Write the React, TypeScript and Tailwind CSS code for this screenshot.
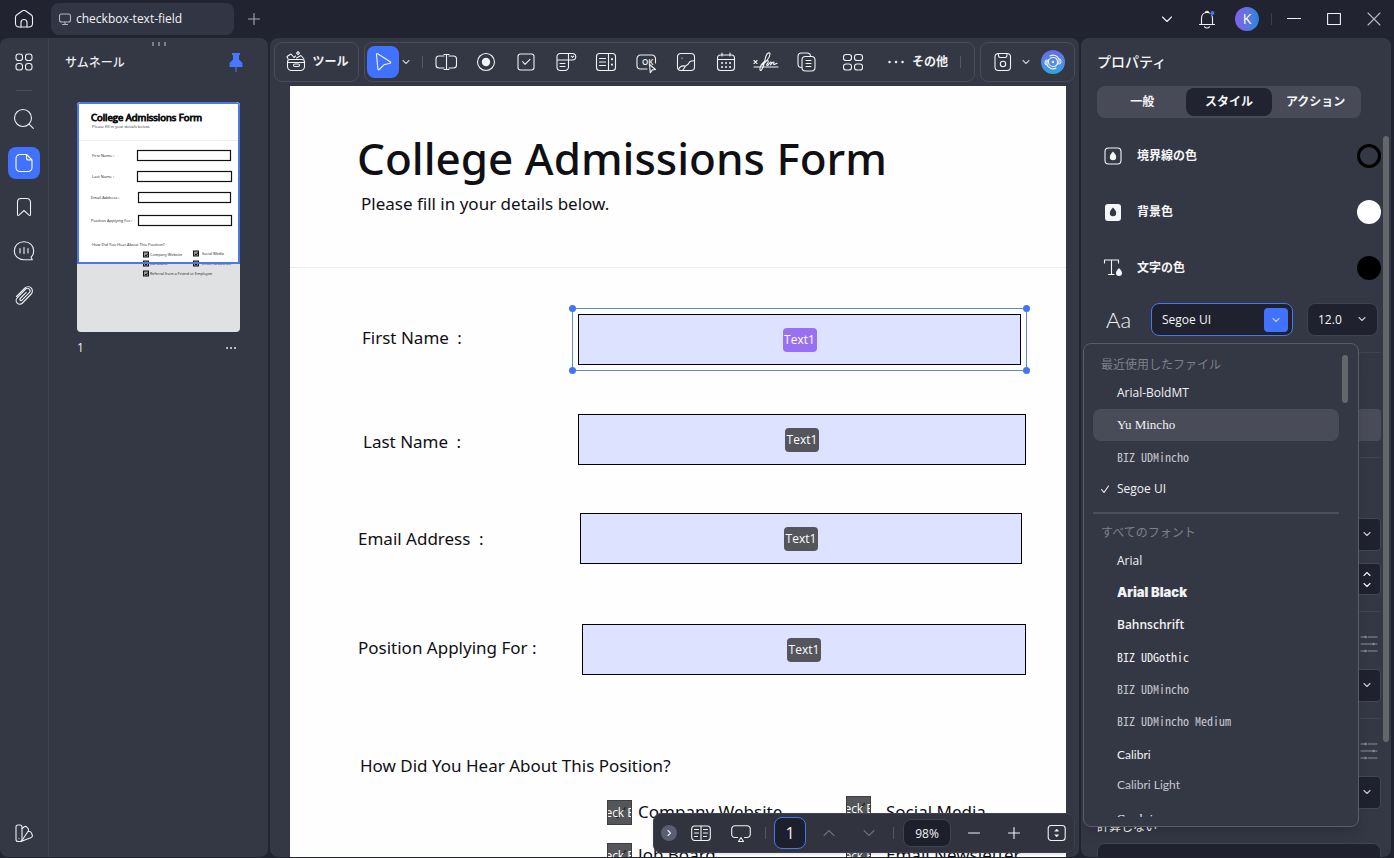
import React from 'react';
import type { ReactNode } from 'react';

interface IconProps {
  size?: number;
  className?: string;
  children: ReactNode;
}

const Icon = ({ size = 24, className = '', children }: IconProps) => (
  <svg
    width={size}
    height={size}
    viewBox={`0 0 ${size} ${size}`}
    fill="none"
    stroke="currentColor"
    strokeWidth="1.1"
    strokeLinecap="round"
    strokeLinejoin="round"
    className={`shrink-0 ${className}`}
    aria-hidden="true"
  >
    {children}
  </svg>
);

const ChevronDown = ({ className = '' }: { className?: string }) => (
  <Icon size={12} className={`text-[#c9cbd3] ${className}`}><path d="M3 4.5l3 3 3-3" /></Icon>
);

const Divider = () => <span className="h-3 w-px shrink-0 bg-[#555866]" />;

/* Title bar */

const TitleBar = () => (
  <header className="flex h-[38px] shrink-0 items-center text-[#f1f2f5]">
    <button aria-label="Home" className="flex h-8 w-12 items-center justify-center">
      <Icon>
        <path d="M3.5 10.2c0-.9.4-1.700 1.100-2.200l6-4.300a2.400 2.400 0 012.800 0l6 4.300c.7.5 1.100 1.300 1.100 2.200v6.300c0 2-1.500 3.500-3.500 3.500H7c-2 0-3.500-1.500-3.500-3.500z" />
        <path d="M9 20v-4.500a3 3 0 016 0V20" />
      </Icon>
    </button>
    <div className="ml-[3px] flex h-8 w-[183px] items-center gap-1 rounded-lg bg-[#323543] pl-[7px]">
      <Icon size={14} className="text-[#b4b7c2]">
        <rect x="1.500" y="2" width="11" height="8" rx="2" />
        <path d="M7 10v2M4.500 12.500h5" />
      </Icon>
      <span className="text-xs">checkbox-text-field</span>
    </div>
    <button aria-label="New tab" className="flex h-8 w-10 items-center justify-center text-[#a5a8b4]">
      <Icon size={14}><path d="M7 1.500v11M1.500 7h11" /></Icon>
    </button>
    <div className="ml-auto flex items-center">
      <button aria-label="Show tabs" className="flex h-8 w-10 items-center justify-center">
        <Icon size={14}><path d="M2.500 5L7 9.500 11.500 5" /></Icon>
      </button>
      <button aria-label="Notifications" className="flex h-8 w-10 items-center justify-center">
        <Icon>
          <path d="M4.500 17.500h15M6.500 17.500v-6c0-3.500 2.200-6 5.500-6s5.500 2.500 5.500 6v6M10.500 5.300a1.600 1.600 0 013 0M9.500 19.800c1.300 1.600 3.700 1.600 5 0" />
          <circle cx="17.500" cy="6" r="2.200" fill="#4579ff" stroke="#212331" strokeWidth="0.500" />
        </Icon>
      </button>
      <button className="mx-2 flex size-6 items-center justify-center rounded-full bg-linear-to-r from-[#8160e8] to-[#1584dc] text-sm text-white">K</button>
      <span className="ml-1 h-3 w-px bg-[#3b3e4d]" />
      <button aria-label="Minimize" className="ml-[2px] flex h-8 w-10 items-center justify-center">
        <Icon size={14}><path d="M0 6.500h14" /></Icon>
      </button>
      <button aria-label="Maximize" className="flex h-8 w-10 items-center justify-center">
        <Icon size={14}><rect x="0.600" y="1.500" width="12.800" height="11" /></Icon>
      </button>
      <button aria-label="Close" className="flex h-8 w-10 items-center justify-center text-[#b9bbc4]">
        <Icon size={14}><path d="M1 1l12 12M13 1L1 13" /></Icon>
      </button>
    </div>
  </header>
);

/* Left side */

const railItems = [
  {
    label: 'Search',
    icon: <><circle cx="11" cy="11" r="8.500" /><path d="M17.300 17.300l4 4" /></>,
  },
  {
    label: 'Pages',
    active: true,
    icon: <path d="M14.500 3.500H8A4 4 0 004 7.500v9a4 4 0 004 4h8a4 4 0 004-4V9zM14.500 3.500V7a2 2 0 002 2H20" />,
  },
  {
    label: 'Bookmarks',
    icon: <path d="M5.500 19.500V7a3.500 3.500 0 013.500-3.500h6A3.500 3.500 0 0118.500 7v12.500c0 1-.8 1.300-1.500.7L12 15.500l-5 4.700c-.7.600-1.500.3-1.500-.7z" />,
  },
  {
    label: 'Comments',
    icon: <><path d="M12 2.800c-5.700 0-9.700 3.800-9.700 8.900s4 9 9.700 9h8.300l-1.300-2.500c1.700-1.500 2.700-3.800 2.700-6.500 0-5.100-4-8.900-9.700-8.900z" /><path d="M8 9.500v4.500M12 8.500v6M16 9.500v4.500" /></>,
  },
  {
    label: 'Attachments',
    icon: <path d="M4.500 13.500L13 5a4.300 4.300 0 016.200 6l-8.700 9a3.700 3.700 0 01-5.300-5.200l8.500-8.600a2.500 2.500 0 013.600 3.500L10 17.200a1.200 1.200 0 01-1.800-1.700l6-6.200" />,
  },
];

const Rail = () => (
  <nav className="flex w-[49px] shrink-0 flex-col items-center gap-3 border-r border-[#41434f] py-2 text-[#eceef3]">
    <button aria-label="Apps" className="flex size-8 items-center justify-center">
      <Icon>
        <rect x="4" y="4" width="6.500" height="6.500" rx="2.600" />
        <rect x="13.500" y="4" width="6.500" height="6.500" rx="2.600" />
        <rect x="4" y="13.500" width="6.500" height="6.500" rx="2.600" />
        <rect x="13.500" y="13.500" width="6.500" height="6.500" rx="2.600" />
      </Icon>
    </button>
    <span className="h-px w-4 shrink-0 bg-[#4a4c59]" />
    {railItems.map(item => (
      <button
        key={item.label}
        aria-label={item.label}
        className={`flex size-8 items-center justify-center rounded-lg ${item.active ? 'bg-[#4172fd] text-white' : ''}`}
      >
        <Icon>{item.icon}</Icon>
      </button>
    ))}
    <button aria-label="Themes" className="mt-auto flex size-8 items-center justify-center">
      <Icon>
        <rect x="4" y="4" width="6" height="16.500" rx="2" />
        <path d="M10 7.500l2.200-1.700c.8-.6 1.800-.5 2.500.2l1.500 1.700c.6.800.5 1.700-.1 2.500L10 19.500M16.500 10.500h1c.8 0 1.500.4 1.800 1.200l1 2.300c.4 1-.1 2-1 2.400L9 20.500M7 17.500v.1" />
      </Icon>
    </button>
  </nav>
);

const thumbFields = [
  { y: 48, x: 60, w: 93, label: 'First Name :', lx: 15 },
  { y: 69, x: 60, w: 94, label: 'Last Name :', lx: 15 },
  { y: 90, x: 61, w: 92, label: 'Email Address :', lx: 14 },
  { y: 113, x: 61, w: 93, label: 'Position Applying For :', lx: 14 },
];

const thumbChecks = [
  { x: 66, y: 150, label: 'Company Website' },
  { x: 116, y: 149, label: 'Social Media' },
  { x: 66, y: 159, label: 'Job Board' },
  { x: 116, y: 159, label: 'Email Newsletter' },
  { x: 66, y: 169, label: 'Referral from a Friend or Employee' },
];

const PageThumbnail = () => (
  <svg viewBox="0 0 163 230" className="block w-full rounded" fontFamily="'Open Sans', sans-serif" role="img" aria-label="Page 1">
    <rect width="163" height="230" fill="#e0e1e3" />
    <rect width="163" height="162" fill="#fff" />
    <text x="14" y="19" fontSize="9.500" fill="#111" stroke="#111" strokeWidth="0.900">College Admissions Form</text>
    <text x="15" y="26" fontSize="4" fill="#333">Please fill in your details below.</text>
    <path d="M0 38.500h163" stroke="#eeeef2" />
    {thumbFields.map(f => (
      <g key={f.label}>
        <text x={f.lx} y={f.y + 7} fontSize="4" fill="#222">{f.label}</text>
        <rect x={f.x + 0.5} y={f.y + 0.5} width={f.w} height="10" fill="#fff" stroke="#111" strokeWidth="1.2" />
      </g>
    ))}
    <text x="15" y="144" fontSize="4" fill="#222">How Did You Hear About This Position?</text>
    {thumbChecks.map(c => (
      <g key={c.label}>
        <rect x={c.x + 0.5} y={c.y} width="5" height="5" fill="#999" stroke="#111" />
        <path d={`M${c.x + 2} ${c.y + 3}l1 1 2-2.500`} stroke="#111" fill="none" />
        <text x={c.x + (c.x > 100 ? 9 : 7)} y={c.y + 4} fontSize="3.800" fill="#222">{c.label}</text>
      </g>
    ))}
    <rect x="1" y="1" width="161" height="160" fill="none" stroke="#4b78e8" strokeWidth="2" />
  </svg>
);

const ThumbnailPanel = () => (
  <section className="flex flex-1 flex-col px-4 text-[#eceef3]">
    <div className="flex h-2 items-end justify-center gap-1">
      <span className="h-1 w-[2px] bg-[#7b7e8b]" />
      <span className="h-1 w-[2px] bg-[#7b7e8b]" />
      <span className="h-1 w-[2px] bg-[#7b7e8b]" />
    </div>
    <div className="flex h-8 items-center justify-between pr-[6px]">
      <h2 className="pt-[2px] text-xs font-medium">サムネール</h2>
      <button aria-label="Pin panel" className="text-[#4579ff]">
        <Icon size={20}>
          <path d="M6 1h8v2h-1v4.500l3.500 3.500v4h-13v-4L7 7.500V3H6z" fill="currentColor" stroke="none" />
          <path d="M10 15v5" />
        </Icon>
      </button>
    </div>
    <div className="mt-6 px-3">
      <PageThumbnail />
      <div className="mt-2 flex h-4 items-center justify-between pr-1 text-xs">
        <span>1</span>
        <button aria-label="Page options">
          <Icon size={10}>
            <path d="M1 5h.1M5 5h.1M9 5h.1" strokeWidth="1.800" />
          </Icon>
        </button>
      </div>
    </div>
  </section>
);

/* Form toolbar */

const formTools = [
  {
    label: 'Text field',
    icon: <><path d="M10 6H5a3 3 0 00-3 3v6a3 3 0 003 3h5M15 6h4.500a3 3 0 013 3v6a3 3 0 01-3 3H15" /><path d="M12.500 4.500v15M10 4.500h5M10 19.500h5" /></>,
  },
  {
    label: 'Radio button',
    icon: <><circle cx="12" cy="12" r="8.500" /><circle cx="12" cy="12" r="4.200" fill="currentColor" stroke="none" /></>,
  },
  {
    label: 'Check box',
    icon: <><rect x="4" y="4" width="16" height="16" rx="2.500" /><path d="M8.500 11.500l2.500 2.800 5-5" /></>,
  },
  {
    label: 'Drop down',
    icon: <><path d="M3 10V6.500a3 3 0 013-3h12.500a3.200 3.200 0 010 6.500zM3 10v7a3.500 3.500 0 003.500 3.500H11a3.500 3.500 0 003.500-3.500V3.500" /><path d="M6 13.500h5M6 16.500h5M17.300 6.200l1.200 1.200 1.200-1.200" /></>,
  },
  {
    label: 'List box',
    icon: <><rect x="2.500" y="3.500" width="19" height="17" rx="3" /><path d="M14.500 3.500v17M5.500 8.500h6M5.500 12h6M5.500 15.500h6" /><path d="M18 9v.2M18 14.500v.2" strokeWidth="2" /></>,
  },
  {
    label: 'Button',
    icon: (
      <>
        <path d="M13 19H6.500A3.500 3.500 0 013 15.500v-7A3.500 3.500 0 016.500 5H18a3.500 3.500 0 013.500 3.500V13" />
        <text x="8" y="15" fontSize="8" fontWeight="600" fill="currentColor" stroke="none">OK</text>
        <path d="M15.500 14.500l6 5-3.200.4-2 2.700z" fill="#343744" />
      </>
    ),
  },
  {
    label: 'Image',
    icon: <><rect x="3.500" y="3.500" width="17" height="17" rx="3.500" /><path d="M4.500 19.500c1-2.500 3.500-4 6.500-3.500M8.500 20.500C11 18 10 16.500 13 15c2-1 1.500-2.500 3.200-3.500 1.200-.7 2.800-.9 4.300-.7M8 8v.2" /></>,
  },
  {
    label: 'Date',
    icon: <><rect x="3.500" y="5" width="17" height="15.500" rx="3" /><path d="M3.500 9.500h17M8 3v3M16 3v3" /><path d="M8 13h.1M12 13h.1M16 13h.1M8 17h.1M12 17h.1M16 17h.1" strokeWidth="1.900" /></>,
  },
  {
    label: 'Signature',
    icon: <path d="M0 10.500l3 3M3 10.500l-3 3M0 17h24M7 15.500c4-2 9-8 9-11.500 0-2-2.500-1.500-3.800 1.500-1.500 3.500-2 11-4.700 14.500-1.500 1.500-2-1-1-3.500 1.500-3.500 5-6.500 7-6 1.500.5.500 2.500-.5 3.500-.8 1 0 2 1 1.200l2.500-3c.5-.5 1 0 .8.800l-.8 2 2.500-2.800c.8-.6 1.200.2.8 1-.5 1.300.3 1.600 1.500.8l1.700-.8" />,
  },
  {
    label: 'Copy fields',
    icon: <><path d="M7.500 17.500a3.500 3.500 0 01-3.500-3.500V6.500A3.500 3.500 0 017.500 3h5.500a3.500 3.500 0 013.500 3.500" /><rect x="8" y="6.500" width="13" height="14.500" rx="3.500" /><path d="M12 10.500h5M12 13.500h5M12 16.500h5" /></>,
  },
];

const FormToolbar = () => (
  <div className="flex items-center gap-[5px] p-1 text-xs text-[#f1f2f5]">
    <button className="flex h-10 w-[85px] shrink-0 items-center justify-center gap-1 rounded-lg border border-[#4a4c59] font-bold">
      <Icon>
        <path d="M3.500 12v4.500a4 4 0 004 4h9a4 4 0 004-4V12a2.500 2.500 0 00-2.500-2.500H6A2.500 2.500 0 003.500 12zM3.500 12.500h17" />
        <rect x="9.500" y="14" width="6" height="2.500" rx="1.200" />
        <path d="M4 9l-1-2.500 4-2.500 3 3.500 1.500-1.500M12.500 8l4.500-2.500 3 3.500M14 1.700l1.500 1.500L14 4.700l-1.500-1.500z" />
      </Icon>
      ツール
    </button>
    <div className="flex h-10 min-w-0 flex-1 items-center rounded-lg border border-[#4a4c59] pl-[2px] pr-[13px]">
      <button aria-label="Select" className="flex size-8 shrink-0 items-center justify-center rounded-lg bg-[#4172fd]">
        <Icon><path d="M5.500 4.500c-.2-.8.5-1.200 1.200-.8l12.500 8c.8.500.6 1.300-.2 1.500l-6 1.600-4.700 4.700c-.6.600-1.300.4-1.400-.4z" /></Icon>
      </button>
      <button aria-label="Selection modes" className="ml-[1px]"><ChevronDown /></button>
      <span className="ml-[10px] flex"><Divider /></span>
      <div className="ml-[3px] flex">
        {formTools.map(tool => (
          <button key={tool.label} aria-label={tool.label} className="flex h-8 w-10 items-center justify-center">
            <Icon className="overflow-visible">{tool.icon}</Icon>
          </button>
        ))}
      </div>
      <button aria-label="Arrange fields" className="ml-[7px] flex h-8 w-10 items-center justify-center">
        <Icon>
          <rect x="2.500" y="4.500" width="8" height="6" rx="2.600" />
          <rect x="13.500" y="4.500" width="8" height="6" rx="2.600" />
          <rect x="2.500" y="14" width="8" height="6" rx="2.600" />
          <rect x="13.500" y="14" width="8" height="6" rx="2.600" />
        </Icon>
      </button>
      <button className="ml-[15px] flex items-center gap-2 whitespace-nowrap font-bold">
        <Icon size={16}><path d="M1.500 8h.1M8 8h.1M14.500 8h.1" strokeWidth="2.400" /></Icon>
        その他
      </button>
      <span className="ml-auto flex"><Divider /></span>
    </div>
    <div className="flex h-10 w-[95px] shrink-0 items-center rounded-lg border border-[#4a4c59] pl-[10px]">
      <button aria-label="Save">
        <Icon>
          <rect x="4" y="3.500" width="15.500" height="17" rx="3.500" />
          <path d="M7.500 3.500v2.300c0 1 .7 1.700 1.700 1.700h5c1 0 1.700-.7 1.700-1.700V3.500" />
          <circle cx="12" cy="14" r="2.700" />
        </Icon>
      </button>
      <button aria-label="Save options" className="ml-[5px]"><ChevronDown /></button>
      <button aria-label="Assistant" className="ml-[9px] flex size-6 items-center justify-center rounded-full bg-linear-to-b from-[#646be6] to-[#2ca5df]">
        <Icon size={20}>
          <circle cx="10" cy="10" r="1.200" fill="currentColor" stroke="none" />
          <path d="M5.500 10a4.500 4.500 0 014.500-4.500c2.500 0 4.500 1.800 4.500 4.500s-2 4.500-4.500 4.500A4.500 4.500 0 015.500 10zM7 4c3-2 8-.5 9 3.500.5 2-.5 4-1.500 5M13 16c-3 2-8 .5-9-3.500-.5-2 .5-4 1.500-5" />
          <path d="M3.500 8c-2 1.500-2 4 0 5M16.500 12c2-1.500 2-4 0-5" />
        </Icon>
      </button>
    </div>
  </div>
);

/* Document */

const formFields = [
  { id: 'first', label: 'First Name\u2002:', selected: true, row: 'mt-[46px] pl-[72px] pr-[45px]', labelBox: 'w-[216px] pb-1' },
  { id: 'last', label: 'Last Name\u2002:', row: 'mt-[49px] pl-[73px] pr-[40px]', labelBox: 'w-[215px] pt-1' },
  { id: 'email', label: 'Email Address\u2002:', row: 'mt-[48px] pl-[68px] pr-[44px]', labelBox: 'w-[222px]' },
  { id: 'position', label: 'Position Applying For :', row: 'mt-[60px] pl-[68px] pr-[40px]', labelBox: 'w-[224px] pb-1' },
];

const handles = ['-left-1 -top-1', '-right-1 -top-1', '-left-1 -bottom-1', '-right-1 -bottom-1'];

const FieldRow = ({ field }: { field: (typeof formFields)[number] }) => (
  <div className={`flex items-center ${field.row}`}>
    <label htmlFor={field.id} className={`shrink-0 ${field.labelBox}`}>{field.label}</label>
    <div className="relative h-[51px] flex-1">
      <input id={field.id} type="text" readOnly className="block size-full border border-black bg-[#dce2ff]" />
      <span className={`absolute left-1/2 top-1/2 flex h-6 w-[34px] -translate-x-1/2 -translate-y-1/2 items-center justify-center rounded font-['Open_Sans',sans-serif] text-xs text-white ${field.selected ? 'bg-[#9a70f3]' : 'bg-[#55565c]'}`}>
        Text1
      </span>
      {field.selected && (
        <div className="absolute -inset-[6px] border border-[#5b8ad8]">
          {handles.map(pos => (
            <span key={pos} className={`absolute size-[7px] rounded-full bg-[#4375ec] ${pos}`} />
          ))}
        </div>
      )}
    </div>
  </div>
);

const CheckOption = ({ label, className = 'gap-[6px]' }: { label: string; className?: string }) => (
  <label className={`flex h-[25px] whitespace-nowrap ${className}`}>
    <span className="relative flex size-[25px] shrink-0 items-center justify-center overflow-hidden border border-[#3d3e40] bg-[#55565a] font-['Open_Sans',sans-serif] text-xs text-white">
      <input type="checkbox" defaultChecked className="absolute inset-0 appearance-none" />
      <svg viewBox="0 0 22 22" className="absolute inset-0" fill="none" stroke="#2b2c2f" strokeWidth="1.5"><path d="M5 12l4 4 8-10" /></svg>
      <span className="relative">Check Box</span>
    </span>
    {label}
  </label>
);

const DocumentPage = () => (
  <article className="ml-[20px] mr-[13px] min-h-0 flex-1 overflow-hidden bg-[#fefeff] font-['Noto_Sans',sans-serif] text-[17px] leading-6 text-[#101014]">
    <div className="h-[182px] border-b border-[#ececf1] pl-[67px] pt-[40px]">
      <h1 className="text-[44px] font-medium leading-[64px]">College Admissions Form</h1>
      <p className="pl-1 pt-[2px]">Please fill in your details below.</p>
    </div>
    {formFields.map(field => <FieldRow key={field.id} field={field} />)}
    <p className="mt-[79px] pl-[70px]">How Did You Hear About This Position?</p>
    <div className="mt-[18px] flex items-start pl-[317px]">
      <div className="flex w-[239px] flex-col gap-[18px] pt-1">
        <CheckOption label="Company Website" />
        <CheckOption label="Job Board" />
      </div>
      <div className="flex flex-col gap-[22px]">
        <CheckOption label="Social Media" className="gap-[15px] leading-8" />
        <CheckOption label="Email Newsletter" className="gap-[15px]" />
      </div>
    </div>
  </article>
);

const PageControls = () => (
  <div className="absolute bottom-1 right-1 flex h-10 w-[422px] items-center rounded-lg border border-[#40424e] bg-[#31333f] px-[7px] text-[#f1f2f5] shadow">
    <button aria-label="Collapse" className="flex size-4 items-center justify-center rounded-full bg-[#5a5e72]">
      <Icon size={10}><path d="M4 2.500L6.500 5 4 7.500" /></Icon>
    </button>
    <button aria-label="Page layout" className="ml-[14px]">
      <Icon size={20}>
        <rect x="0.700" y="3" width="18.600" height="14.500" rx="3" />
        <path d="M10 3v14.500M3.500 6.500h4M3.500 10h4M3.500 13.500h3M12.500 6.500h4M12.500 10h4M12.500 13.500h3" />
      </Icon>
    </button>
    <button aria-label="Presentation" className="ml-5">
      <Icon size={20}>
        <path d="M6.500 14.500H4a3.300 3.300 0 01-3.300-3.300V6A3.300 3.300 0 014 2.700h12A3.300 3.300 0 0119.300 6v5.200a3.300 3.300 0 01-3.300 3.300h-2.500M10 14.500l2.500 4h-5z" />
      </Icon>
    </button>
    <span className="ml-[14px] flex"><Divider /></span>
    <input aria-label="Page" defaultValue="1" className="ml-2 size-8 rounded-lg border border-[#4579e8] bg-[#1d1f2c] text-center text-base" />
    <button aria-label="Previous page" className="ml-4 text-[#6b6e7c]"><Icon size={14}><path d="M2 9.500l5-5 5 5" /></Icon></button>
    <button aria-label="Next page" className="ml-[26px] text-[#6b6e7c]"><Icon size={14}><path d="M2 4.500l5 5 5-5" /></Icon></button>
    <span className="ml-[17px] flex"><Divider /></span>
    <input aria-label="Zoom" defaultValue="98%" className="ml-[9px] h-7 w-12 rounded-lg border border-[#41434f] bg-[#1d1f2c] text-center text-xs" />
    <button aria-label="Zoom out" className="ml-4"><Icon size={14}><path d="M1.500 7h11" /></Icon></button>
    <button aria-label="Zoom in" className="ml-[26px]"><Icon size={14}><path d="M1.500 7h11M7 1.500v11" /></Icon></button>
    <button aria-label="Fit page" className="ml-auto">
      <Icon size={20}>
        <rect x="1.200" y="2.500" width="17" height="15" rx="3" />
        <path d="M8 8l1.700-2 1.700 2zM8 12l1.700 2 1.700-2z" fill="currentColor" strokeWidth="0.600" />
      </Icon>
    </button>
  </div>
);

/* Properties */

const tabs = ['一般', 'スタイル', 'アクション'];

const drop = 'M12 7.500c2 2.300 3.200 3.700 3.200 5.600a3.200 3.200 0 01-6.400 0c0-1.900 1.200-3.300 3.200-5.600z';

const colorRows = [
  {
    label: '境界線の色',
    icon: <><rect x="4" y="4" width="16" height="16" rx="3.500" /><path d={drop} fill="currentColor" stroke="none" /></>,
    swatch: 'border-[3px] border-black',
  },
  {
    label: '背景色',
    icon: <><rect x="4" y="4" width="16" height="17" rx="3" fill="currentColor" stroke="none" /><path d={drop} fill="#343744" stroke="none" /></>,
    swatch: 'bg-white',
  },
  {
    label: '文字の色',
    icon: <><path d="M3.500 7V4h14v3M10.500 4v14.500M7.500 18.500H13" /><path d="M18 12c2 2.300 3 3.500 3 5a3 3 0 01-6 0c0-1.500 1-2.700 3-5z" fill="currentColor" stroke="none" /></>,
    swatch: 'bg-black',
  },
];

interface FontEntry {
  name: string;
  style?: string;
  checked?: boolean;
}

const gothicStyle = "font-['Noto_Sans_Mono_CJK_JP','Liberation_Mono',monospace]";
const minchoStyle = "font-['Noto_Sans_Mono_CJK_JP','Liberation_Mono',monospace] text-[#c6c8d0]";

const recentFonts: FontEntry[] = [
  { name: 'Arial-BoldMT' },
  { name: 'Yu Mincho', style: "font-['Liberation_Serif',serif] text-[13px] bg-[#494b58]" },
  { name: 'BIZ UDMincho', style: minchoStyle },
  { name: 'Segoe UI', checked: true },
];

const allFonts: FontEntry[] = [
  { name: 'Arial' },
  { name: 'Arial Black', style: "font-['Inter',sans-serif] text-[13px] font-black" },
  { name: 'Bahnschrift', style: 'font-semibold' },
  { name: 'BIZ UDGothic', style: gothicStyle },
  { name: 'BIZ UDMincho', style: minchoStyle },
  { name: 'BIZ UDMincho Medium', style: minchoStyle },
  { name: 'Calibri', style: "font-['Lato',sans-serif] pt-1" },
  { name: 'Calibri Light', style: "font-['Lato',sans-serif] text-[#c6c8d0]" },
  { name: 'Cambria', style: "font-['Liberation_Serif',serif] pt-1" },
];

const FontOption = ({ font }: { font: FontEntry }) => (
  <button
    role="option"
    aria-selected={!!font.checked}
    className={`relative flex h-8 w-full items-center rounded-lg pl-6 text-left ${font.style ?? ''}`}
  >
    {font.checked && <Icon size={10} className="absolute left-[7px]"><path d="M1.500 5.500l2.500 3 4.500-6.500" /></Icon>}
    {font.name}
  </button>
);

const FontMenu = () => (
  <div className="absolute left-[2px] top-full z-10 mt-[7px] h-[484px] w-[276px] rounded-lg border border-[#5a5c68] bg-[#343744] py-[9px] pl-[9px] pr-[10px] text-xs text-[#f1f2f5] shadow-lg">
    <div className="flex h-full">
      <div role="listbox" aria-label="フォント" className="h-full w-[246px] overflow-hidden">
        <div className="flex h-6 items-center pl-2 text-[#7d808c]">最近使用したファイル</div>
        {recentFonts.map(f => <FontOption key={f.name} font={f} />)}
        <div className="my-[7px] h-[2px] bg-[#4d4f5c]" />
        <div className="flex h-6 items-center pl-2 text-[#7d808c]">すべてのフォント</div>
        {allFonts.map(f => <FontOption key={f.name} font={f} />)}
      </div>
      <div className="ml-auto mt-[2px] h-12 w-[6px] rounded-full bg-[#63666a]" />
    </div>
  </div>
);

const PanelSelect = ({ label, className = '' }: { label: string; className?: string }) => (
  <div className={`relative ${className}`}>
    <select aria-label={label} className="block h-[33px] w-full appearance-none rounded border border-[#444653] bg-[#1f212e]" />
    <ChevronDown className="pointer-events-none absolute right-2 top-[10px]" />
  </div>
);

const SliderGlyph = () => (
  <button aria-label="Options" className="ml-auto block text-[#8b8d98]">
    <Icon size={24}>
      <path d="M4 5h3M11 5h9M4 12h11M18 12h2M4 19h3M11 19h9" />
      <path d="M8.500 5h.1M16.500 12h.1M8.500 19h.1" strokeWidth="2.400" />
    </Icon>
  </button>
);

const PropertiesPanel = () => (
  <aside className="relative flex w-[310px] shrink-0 flex-col overflow-hidden rounded-lg bg-[#343744] text-[#f5f6f8]">
    <h2 className="flex h-12 shrink-0 items-center pl-4 text-sm font-medium">プロパティ</h2>
    <div role="tablist" className="ml-4 mr-[30px] flex h-8 shrink-0 rounded-lg bg-[#484a57] p-[2px] text-xs font-bold">
      {tabs.map(tab => (
        <button key={tab} role="tab" className={`flex-1 rounded-lg ${tab === 'スタイル' ? 'bg-[#212331]' : ''}`}>{tab}</button>
      ))}
    </div>
    <div className="mt-[10px]">
      {colorRows.map(row => (
        <div key={row.label} className="flex h-14 items-center pl-5 pr-[10px] text-xs font-bold">
          <Icon>{row.icon}</Icon>
          <span className="ml-3">{row.label}</span>
          <button aria-label={row.label} className={`ml-auto size-6 rounded-full ${row.swatch}`} />
        </div>
      ))}
    </div>
    <div className="relative mt-[7px] flex h-[33px] shrink-0 items-center pl-[25px] pr-[13px] text-xs">
      <span className="w-[45px] font-['Lato',sans-serif] text-[22px] font-light" aria-hidden="true">Aa</span>
      <div className="relative flex h-[33px] w-[142px] items-center rounded-lg border border-[#4579e8] bg-[#1f212e] pr-1">
        <input aria-label="フォント" role="combobox" aria-expanded="true" defaultValue="Segoe UI" className="min-w-0 flex-1 bg-transparent pl-[10px] outline-none" />
        <button aria-label="Open font list" className="flex size-6 items-center justify-center rounded bg-[#4172fd]"><ChevronDown /></button>
      </div>
      <div className="relative ml-auto">
        <select aria-label="サイズ" className="h-[33px] w-[71px] appearance-none rounded-lg border border-[#41434f] bg-[#1f212e] pl-[10px]">
          <option>12.0</option>
        </select>
        <ChevronDown className="pointer-events-none absolute right-[10px] top-[10px]" />
      </div>
      <FontMenu />
    </div>
    <div className="shrink-0 pl-4 pr-[10px]">
      <div className="mt-4 border-t border-[#41434f] pt-14">
        <div className="h-8 rounded-sm bg-[#494b58]" />
      </div>
      <div className="mt-4 border-t border-[#41434f] pt-[60px]">
        <PanelSelect label="線種" />
        <div className="mt-3 flex h-8 items-center justify-end rounded border border-[#444653] bg-[#1f212e] pr-2">
          <div className="flex flex-col gap-px">
            <button aria-label="Increase"><Icon size={10}><path d="M2 6.500l3-3 3 3" /></Icon></button>
            <button aria-label="Decrease"><Icon size={10}><path d="M2 3.500l3 3 3-3" /></Icon></button>
          </div>
        </div>
      </div>
      <div className="mt-4 border-t border-[#41434f] pt-5">
        <SliderGlyph />
        <PanelSelect label="書式" className="mt-[13px]" />
      </div>
      <div className="mt-4 border-t border-[#41434f] pt-5">
        <SliderGlyph />
        <PanelSelect label="検証" className="mt-[13px]" />
      </div>
      <p className="mt-[9px] text-xs leading-[18px]">計算しない</p>
      <input aria-label="計算" type="text" className="mt-[7px] h-8 w-full rounded-lg border border-[#41434f] bg-[#1f212e]" />
    </div>
    <div className="absolute right-[2px] top-[98px] h-[606px] w-[6px] rounded-full bg-[#63666a]" />
  </aside>
);

export default function App() {
  return (
    <div className="flex h-screen flex-col overflow-hidden bg-[#212331] font-['Open_Sans','Noto_Sans_CJK_JP',sans-serif]">
      <TitleBar />
      <div className="flex min-h-0 flex-1 gap-[2px] pb-px pr-[3px]">
        <div className="flex w-[268px] shrink-0 overflow-hidden rounded-lg bg-[#343744]">
          <Rail />
          <ThumbnailPanel />
        </div>
        <main className="relative flex min-w-0 flex-1 flex-col overflow-hidden rounded-lg bg-[#343744]">
          <FormToolbar />
          <DocumentPage />
          <PageControls />
        </main>
        <PropertiesPanel />
      </div>
    </div>
  );
}
